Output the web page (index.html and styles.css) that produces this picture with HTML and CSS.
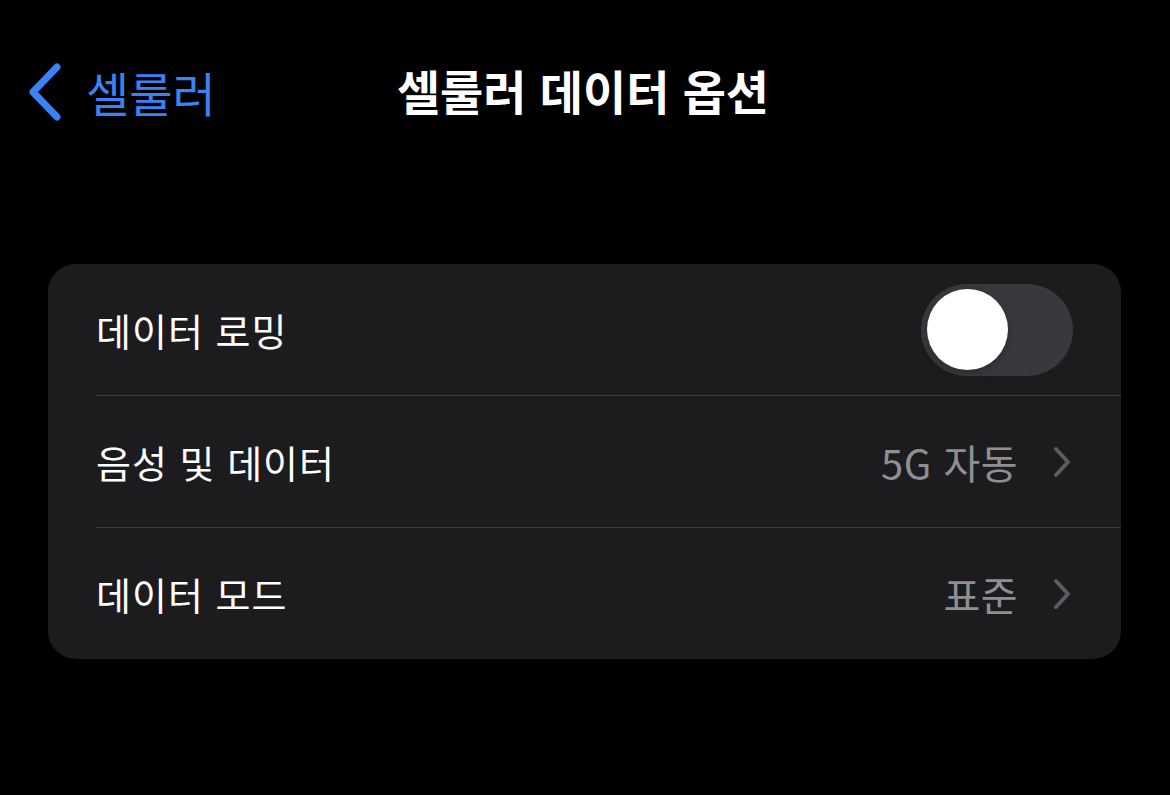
FILE: index.html
```html
<!DOCTYPE html>
<html lang="ko">
	<head>
		<meta charset="UTF-8" />
		<meta name="viewport" content="width=device-width, initial-scale=1.0" />
		<title>셀룰러 데이터 옵션</title>
		<link rel="stylesheet" href="styles.css">
	</head>
	<body>
		<!-- Nav bar -->
		<header class="navbar">
			<a class="back" href="#">
				<svg class="back-icon" width="36" height="58" viewBox="0 0 36 58">
					<path d="M30 4 L6 29 L30 54" fill="none" stroke="#3a82f7" stroke-width="7" stroke-linecap="round" stroke-linejoin="round" />
				</svg>
				<span>셀룰러</span>
			</a>
			<h1 class="title">셀룰러 데이터 옵션</h1>
		</header>

		<!-- Settings group -->
		<section class="group">
			<div class="row">
				<span class="label">데이터 로밍</span>
				<div class="toggle"><div class="knob"></div></div>
			</div>
			<div class="row">
				<span class="label">음성 및 데이터</span>
				<span class="value">5G 자동</span>
				<svg class="chevron" width="20" height="32" viewBox="0 0 20 32">
					<path d="M4 3 L16 16 L4 29" fill="none" stroke="#5b5b60" stroke-width="4" stroke-linecap="round" stroke-linejoin="round" />
				</svg>
			</div>
			<div class="row">
				<span class="label">데이터 모드</span>
				<span class="value">표준</span>
				<svg class="chevron" width="20" height="32" viewBox="0 0 20 32">
					<path d="M4 3 L16 16 L4 29" fill="none" stroke="#5b5b60" stroke-width="4" stroke-linecap="round" stroke-linejoin="round" />
				</svg>
			</div>
		</section>
	</body>
</html>
```

FILE: styles.css
```css
body {
	margin: 0;
	background-color: #000;
	color: #fff;
	font-family: "Noto Sans CJK KR", "Noto Sans", sans-serif;
	width: 1170px;
	height: 795px;
	overflow: hidden;
}

.navbar {
	position: relative;
	height: 186px;
	display: flex;
	align-items: flex-start;
	justify-content: center;
}

.back {
	position: absolute;
	left: 27px;
	top: 63px;
	display: flex;
	align-items: center;
	gap: 23px;
	color: #3a82f7;
	text-decoration: none;
	font-size: 47px;
	line-height: 58px;
}

.back-icon {
	display: block;
}

.title {
	margin: 61px 0 0;
	padding-right: 4px;
	font-size: 47px;
	font-weight: bold;
	line-height: 58px;
}

.group {
	margin: 78px 49px 0 48px;
	background-color: #1c1c1e;
	border-radius: 28px;
	overflow: hidden;
}

.row {
	display: flex;
	align-items: center;
	height: 131px;
	margin-left: 48px;
	padding-right: 48px;
	border-top: 1px solid #3a3a3c;
	font-size: 38px;
	letter-spacing: 1px;
}

.row:first-child {
	border-top: none;
}

.label {
	flex: 1;
}

.value {
	color: #8e8e93;
	margin-right: 34px;
	font-size: 40px;
	letter-spacing: 0.5px;
}

.chevron {
	display: block;
	margin-right: 1px;
}

.toggle {
	width: 152px;
	height: 92px;
	border-radius: 46px;
	background-color: #39393d;
	display: flex;
	align-items: center;
	padding-left: 6px;
	box-sizing: border-box;
}

.knob {
	width: 81px;
	height: 81px;
	border-radius: 50%;
	background-color: #fff;
	box-shadow: 0 3px 8px rgba(0, 0, 0, 0.25);
}
```
